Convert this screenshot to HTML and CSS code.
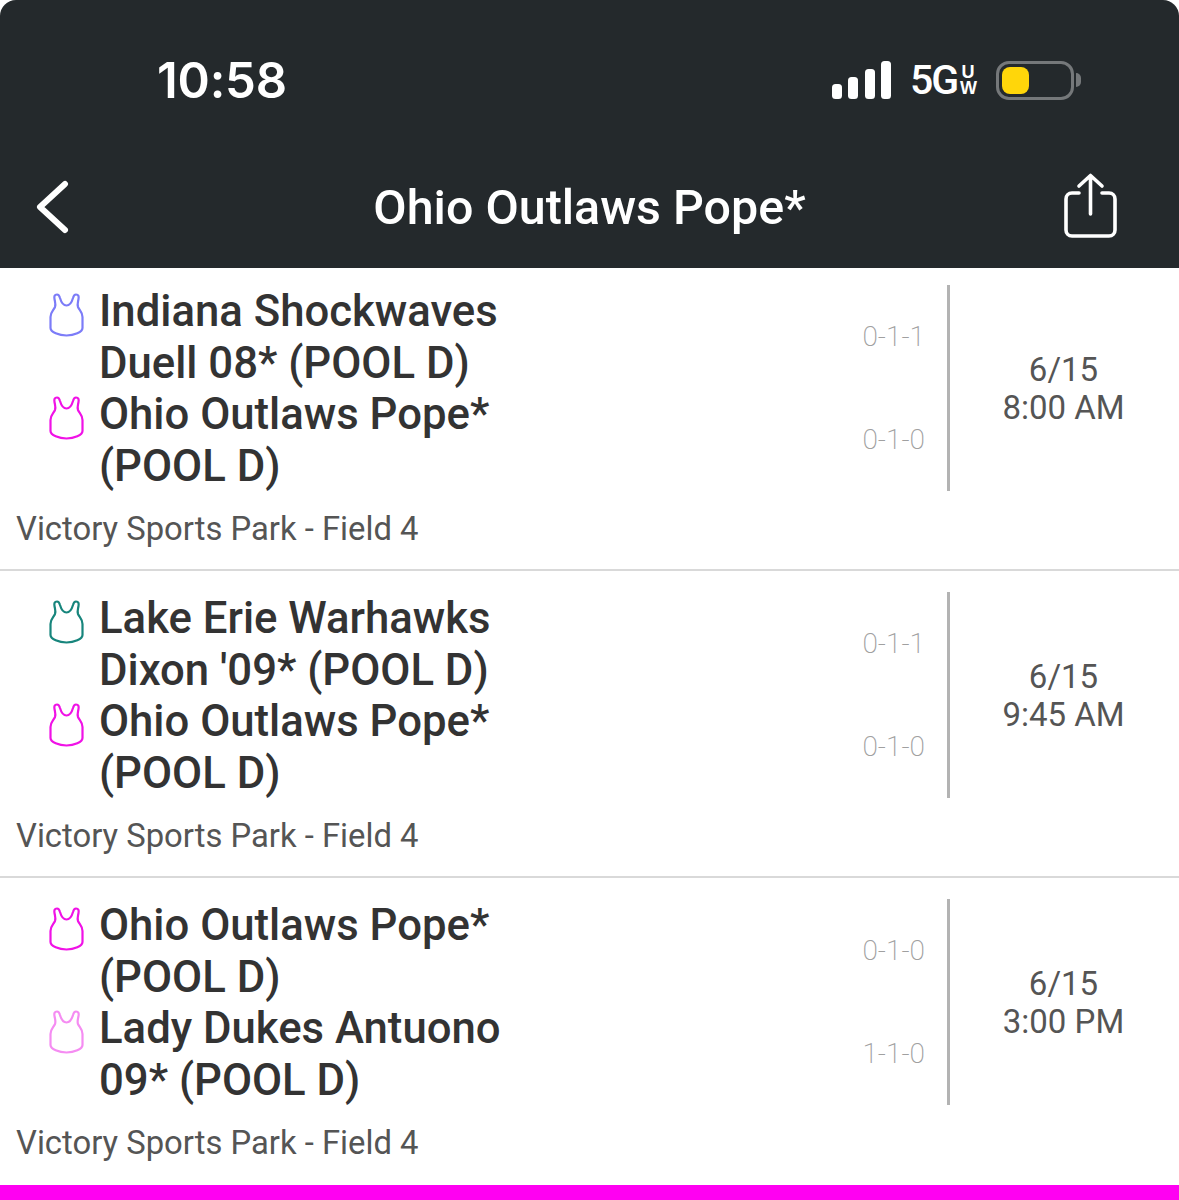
FILE: index.html
```html
<!DOCTYPE html>
<html lang="en">
<head>
    <meta charset="UTF-8">
    <title>Ohio Outlaws Pope*</title>
    <link rel="stylesheet" href="styles.css">
</head>
<body>
    <svg class="defs" width="0" height="0">
        <symbol id="jersey" viewBox="0 0 36 44">
            <path d="M8 1.500C5.500 1.500 5 3.500 5.500 6C6 9 7 11.500 6 14C4.500 17.500 1.500 19 1.500 24V35C1.500 39 10 42.500 17.500 42.500C25 42.500 33.500 39 33.500 35V24C33.500 19 30.500 17.500 29 14C28 11.500 29 9 29.500 6C30 3.500 29.500 1.500 27 1.500C25 1.500 24.500 3 24 5C23 8.500 21 12.500 17.500 12.500C14 12.500 12 8.500 11 5C10.500 3 10 1.500 8 1.500Z" fill="none" stroke="currentColor" stroke-width="2.2"/>
        </symbol>
    </svg>

    <header class="top">
        <div class="status">
            <span class="clock">10:58</span>
            <div class="status-right">
                <div class="signal">
                    <span class="bar bar1"></span>
                    <span class="bar bar2"></span>
                    <span class="bar bar3"></span>
                    <span class="bar bar4"></span>
                </div>
                <div class="network">
                    <span class="net-5g">5G</span>
                    <span class="net-uw">U W</span>
                </div>
                <div class="battery">
                    <div class="battery-body"><div class="battery-fill"></div></div>
                    <div class="battery-tip"></div>
                </div>
            </div>
        </div>
        <nav class="nav">
            <svg class="back" width="34" height="54" viewBox="0 0 34 54">
                <path d="M30 4L5 27L30 50" fill="none" stroke="#fff" stroke-width="6" stroke-linecap="round" stroke-linejoin="round"/>
            </svg>
            <h1 class="title">Ohio Outlaws Pope*</h1>
            <svg class="share" width="54" height="68" viewBox="0 0 54 68">
                <path d="M16 20H9C5.500 20 3 22.500 3 26V57C3 60.500 5.500 63 9 63H46C49.500 63 52 60.500 52 57V26C52 22.500 49.500 20 46 20H39" fill="none" stroke="#fff" stroke-width="3.6" stroke-linecap="round"/>
                <path d="M27.500 41V3M16 13L27.500 2.500L39 13" fill="none" stroke="#fff" stroke-width="3.6" stroke-linecap="round" stroke-linejoin="round"/>
            </svg>
        </nav>
    </header>

    <main class="games">
        <section class="game">
            <div class="game-main">
                <div class="teams">
                    <div class="team">
                        <svg class="jersey c-blue"><use href="#jersey"/></svg>
                        <div class="team-name">Indiana Shockwaves Duell 08* (POOL D)</div>
                        <div class="record">0-1-1</div>
                    </div>
                    <div class="team">
                        <svg class="jersey c-magenta"><use href="#jersey"/></svg>
                        <div class="team-name">Ohio Outlaws Pope* (POOL D)</div>
                        <div class="record">0-1-0</div>
                    </div>
                </div>
                <div class="when">6/15<br>8:00 AM</div>
            </div>
            <div class="venue">Victory Sports Park - Field 4</div>
        </section>

        <section class="game">
            <div class="game-main">
                <div class="teams">
                    <div class="team">
                        <svg class="jersey c-teal"><use href="#jersey"/></svg>
                        <div class="team-name">Lake Erie Warhawks Dixon '09* (POOL D)</div>
                        <div class="record">0-1-1</div>
                    </div>
                    <div class="team">
                        <svg class="jersey c-magenta"><use href="#jersey"/></svg>
                        <div class="team-name">Ohio Outlaws Pope* (POOL D)</div>
                        <div class="record">0-1-0</div>
                    </div>
                </div>
                <div class="when">6/15<br>9:45 AM</div>
            </div>
            <div class="venue">Victory Sports Park - Field 4</div>
        </section>

        <section class="game">
            <div class="game-main">
                <div class="teams">
                    <div class="team">
                        <svg class="jersey c-magenta"><use href="#jersey"/></svg>
                        <div class="team-name">Ohio Outlaws Pope* (POOL D)</div>
                        <div class="record">0-1-0</div>
                    </div>
                    <div class="team">
                        <svg class="jersey c-pink"><use href="#jersey"/></svg>
                        <div class="team-name">Lady Dukes Antuono 09* (POOL D)</div>
                        <div class="record">1-1-0</div>
                    </div>
                </div>
                <div class="when">6/15<br>3:00 PM</div>
            </div>
            <div class="venue">Victory Sports Park - Field 4</div>
        </section>
    </main>
    <div class="accent"></div>
</body>
</html>
```

FILE: styles.css
```css
html, body {
    margin: 0;
    padding: 0;
    background-color: #ffffff;
}
body {
    font-family: Roboto, "Liberation Sans", sans-serif;
    height: 1200px;
    overflow: hidden;
    display: flex;
    flex-direction: column;
}
.defs {
    display: block;
    height: 0;
}

/* header */
.top {
    background-color: #24292c;
    border-radius: 16px 16px 0 0;
    color: #ffffff;
    height: 268px;
    flex: none;
}
.status {
    height: 160px;
    display: flex;
    justify-content: space-between;
    align-items: center;
    padding: 0 98px 0 157px;
}
.clock {
    font-family: Inter, sans-serif;
    font-size: 49px;
    font-weight: 600;
    letter-spacing: -0.2px;
}
.status-right {
    display: flex;
    align-items: center;
}
.signal {
    display: flex;
    align-items: flex-end;
    gap: 6.3px;
    height: 38px;
    margin-right: 19px;
}
.bar {
    width: 10px;
    background-color: #ffffff;
    border-radius: 3.5px;
}
.bar1 { height: 15px; }
.bar2 { height: 22px; }
.bar3 { height: 30px; }
.bar4 { height: 38px; }
.network {
    display: flex;
    align-items: center;
    margin-right: 20px;
}
.net-5g {
    font-size: 41px;
    font-weight: 500;
    line-height: 38px;
    letter-spacing: -2px;
    width: 47px;
    flex: none;
    margin-right: 3px;
}
.net-uw {
    font-family: "Liberation Sans", sans-serif;
    font-size: 18px;
    font-weight: 700;
    line-height: 16px;
    text-align: center;
    width: 16px;
}
.battery {
    display: flex;
    align-items: center;
    gap: 2px;
}
.battery-body {
    box-sizing: border-box;
    width: 78px;
    height: 39px;
    border: 3px solid #75787a;
    border-radius: 13px;
    padding: 3px;
}
.battery-fill {
    width: 27px;
    height: 100%;
    background-color: #ffd60a;
    border-radius: 8px;
}
.battery-tip {
    width: 5px;
    height: 14px;
    background-color: #75787a;
    border-radius: 0 5px 5px 0;
}
.nav {
    height: 108px;
    display: grid;
    grid-template-columns: 1fr auto 1fr;
    align-items: center;
    padding: 0 35px 14px;
    box-sizing: border-box;
}
.share {
    justify-self: end;
    margin-right: 27px;
}
.title {
    margin: 0;
    font-size: 48.4px;
    font-weight: 500;
}

/* game rows */
.games {
    flex: 1;
}
.game {
    box-sizing: border-box;
    height: 307px;
    padding: 21px 0 0 17px;
    border-bottom: 2px solid #d9d9d9;
}
.game:first-child {
    height: 303px;
    padding-top: 17px;
}
.game:last-child {
    border-bottom: none;
}
.game-main {
    display: flex;
}
.teams {
    width: 933px;
    flex: none;
    box-sizing: border-box;
    padding: 0 22px 0 32px;
    border-right: 3px solid #b3b3b3;
}
.team {
    display: flex;
    align-items: flex-start;
}
.jersey {
    width: 36px;
    height: 44px;
    flex: none;
    margin: 8px 14px 0 0;
}
.c-blue { color: #7c7cf8; }
.c-magenta { color: #f012e6; }
.c-teal { color: #17857c; }
.c-pink { color: #f58cf2; }
.team-name {
    flex: 1;
    max-width: 420px;
    font-size: 43.7px;
    font-weight: 500;
    line-height: 51.5px;
    color: #333333;
    margin: 1px auto -1px 0;
}
.record {
    align-self: center;
    font-size: 28px;
    font-weight: 200;
    color: #a0a0a0;
}
.when {
    flex: 1;
    align-self: center;
    text-align: center;
    font-size: 33px;
    line-height: 38px;
    color: #555555;
    padding: 1px 2px 0 0;
}
.venue {
    margin: 18px 0 0 -1px;
    font-size: 32.8px;
    line-height: 40px;
    color: #555555;
}
.accent {
    height: 16px;
    flex: none;
    background-color: #ff00f2;
}
```
